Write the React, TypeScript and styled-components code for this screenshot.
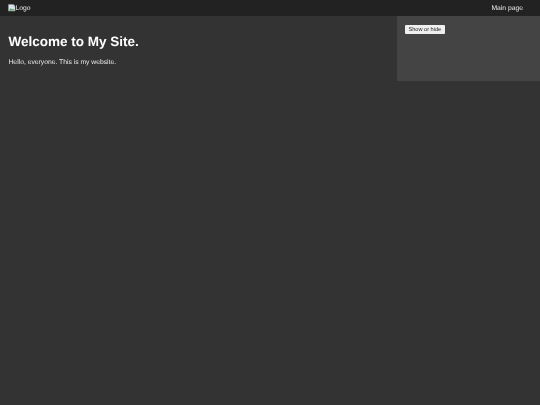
import React from "react";
import styled, { createGlobalStyle } from "styled-components";

const GlobalStyle = createGlobalStyle`
  html, body {
    margin: 0;
    padding: 0;
    height: 100%;
    background-color: #333333;
  }
  #root {
    height: 100%;
  }
`;
const Page = styled.div`
  display: flex;
  flex-direction: column;
  width: 100%;
  min-height: 405px;
  background-color: #333333;
  color: #ffffff;
  font-family: "Liberation Sans", Arial, sans-serif;
  font-size: 6.75px;
  text-rendering: geometricPrecision;
  filter: blur(0.25px);
`;
const Header = styled.header`
  display: flex;
  justify-content: space-between;
  align-items: center;
  height: 16px;
  padding: 0 17px 0 8px;
  background-color: #222222;
`;
const Logo = styled.div`
  display: flex;
  align-items: center;
  color: #e8e8e8;
`;
const NavLink = styled.a`
  color: #e8e8e8;
  text-decoration: none;
`;
const Body = styled.div`
  display: flex;
  justify-content: space-between;
  align-items: flex-start;
`;
const Main = styled.main`
  padding: 18px 8.5px 0;
`;
const Title = styled.h1`
  margin: 0 0 9px;
  font-size: 13.5px;
  font-weight: 700;
  line-height: 16px;
`;
const Intro = styled.p`
  margin: 0;
  line-height: 8px;
  color: #e8e8e8;
`;
const Sidebar = styled.aside`
  box-sizing: border-box;
  width: 143px;
  height: 65px;
  padding: 9px 8px;
  background-color: #444444;
`;
const ToggleButton = styled.button`
  display: block;
  height: 8.5px;
  padding: 0 3.5px;
  border: 0;
  border-radius: 1px;
  background-color: #efefef;
  color: #222222;
  font-family: inherit;
  font-size: 5.6px;
  line-height: 8.5px;
`;

const BrokenImage = () => (
  <svg width="7.5" height="7.5" viewBox="0 0 16 16" aria-hidden="true">
    <path d="M1 1h10l4 4v10H1z" fill="#d8e4f4" stroke="#a0a0a0" />
    <path d="M2 14l4-5 3 3 2-2 3 4z" fill="#4f9a4a" />
    <path d="M11 1v4h4" fill="#ffffff" stroke="#a0a0a0" />
  </svg>
);

export default function App() {
  return (
    <Page>
      <GlobalStyle />
      <Header>
        <Logo>
          <BrokenImage />
          Logo
        </Logo>
        <NavLink href="#">Main page</NavLink>
      </Header>
      <Body>
        <Main>
          <Title>Welcome to My Site.</Title>
          <Intro>Hello, everyone. This is my website.</Intro>
        </Main>
        <Sidebar>
          <ToggleButton>Show or hide</ToggleButton>
        </Sidebar>
      </Body>
    </Page>
  );
}
